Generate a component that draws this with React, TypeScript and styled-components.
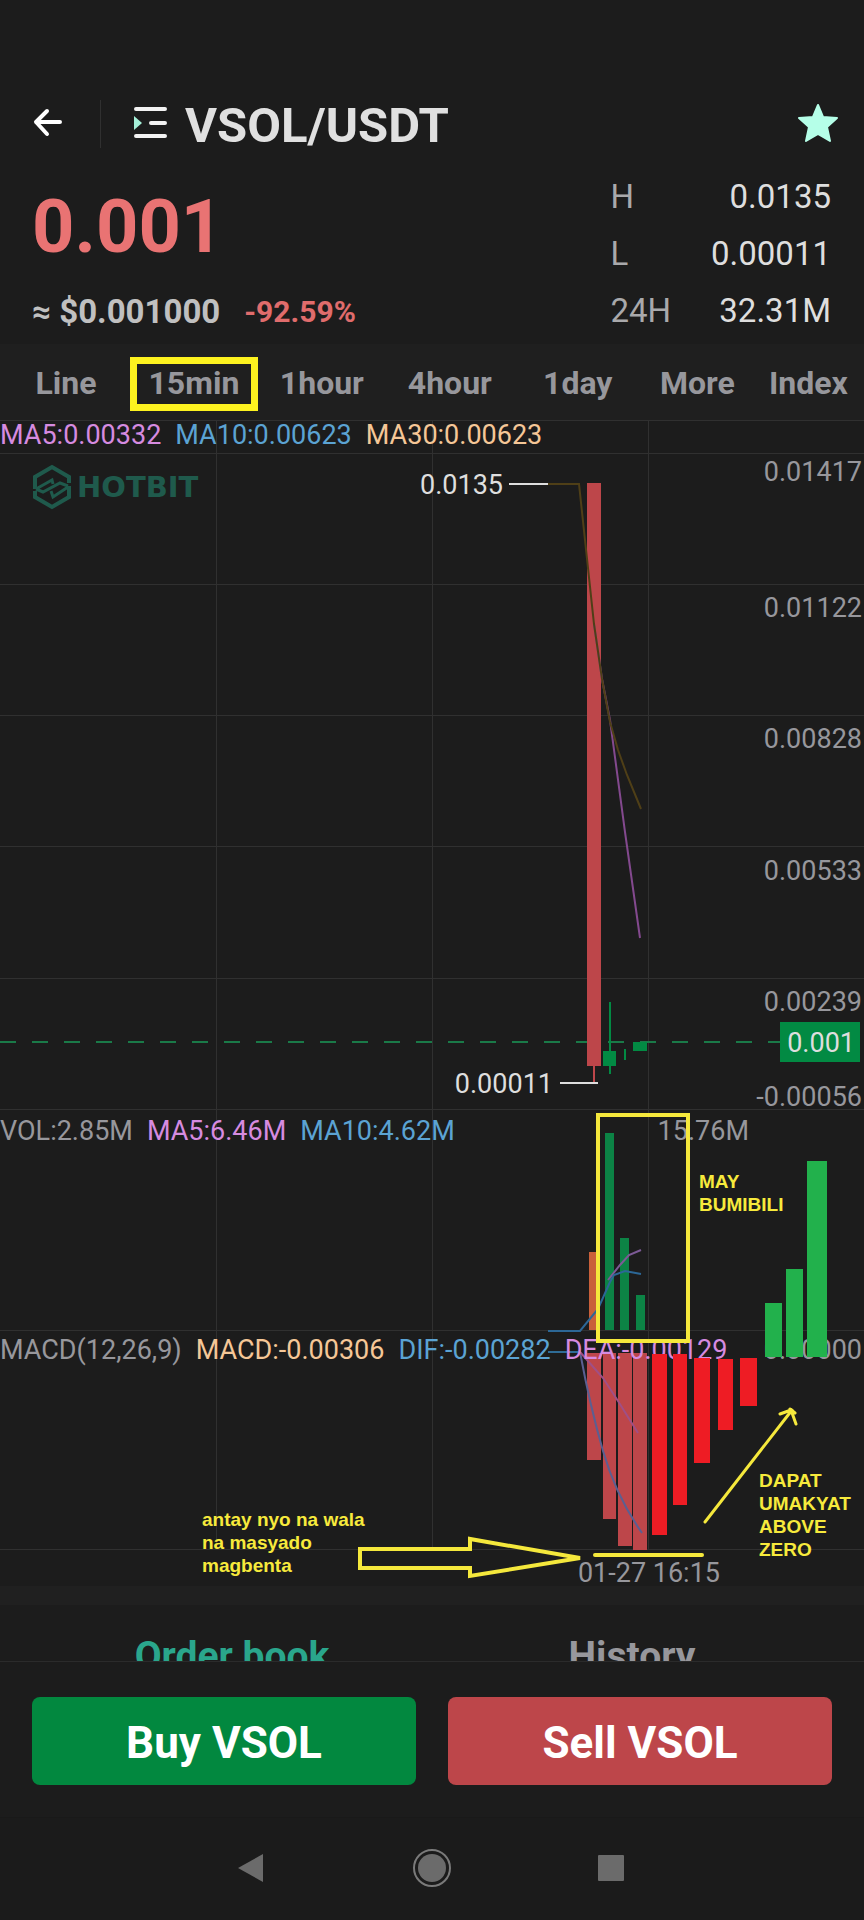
import React from "react";
import styled, { createGlobalStyle } from "styled-components";

const GlobalStyle = createGlobalStyle`
  * { box-sizing: border-box; }
  body {
    margin: 0;
    background: #1c1c1c;
    color: #dedede;
    font-family: Roboto, "Liberation Sans", sans-serif;
  }
  button { font-family: inherit; padding: 0; border: 0; background: none; color: inherit; cursor: pointer; }
`;

const Screen = styled.main`
  display: flex;
  flex-direction: column;
  min-height: 100vh;
  padding-top: 92px;
`;

const Header = styled.header`
  display: flex;
  align-items: center;
  height: 64px;
  padding: 0 24px 0 32px;
`;

const IconButton = styled.button`
  display: flex;
  align-items: center;
  justify-content: center;
`;

const Divider = styled.span`
  width: 1px;
  height: 48px;
  margin: 0 32px 0 37px;
  background: #303030;
`;

const Pair = styled.h1`
  flex: 1;
  margin: 0 0 0 18px;
  padding-top: 3px;
  font-size: 49px;
  line-height: 64px;
  font-weight: 700;
  color: #e0e0e0;
`;

const Summary = styled.section`
  display: flex;
  justify-content: space-between;
  padding: 12px 33px 5px 32px;
`;

const PriceColumn = styled.div`
  display: flex;
  flex-direction: column;
  justify-content: space-between;
`;

const Price = styled.strong`
  font-size: 74px;
  line-height: 117px;
  font-weight: 700;
  color: #e97373;
`;

const PriceDetail = styled.div`
  display: flex;
  align-items: center;
  gap: 24px;
  line-height: 54px;
  font-weight: 700;
  font-size: 33px;
  color: #c0c0c0;
`;

const Change = styled.span`
  font-size: 30px;
  color: #e06c6c;
`;

const Stats = styled.dl`
  display: grid;
  grid-template-columns: auto auto;
  column-gap: 40px;
  margin: 0;
  font-size: 33px;
  line-height: 57px;
`;

const StatName = styled.dt`
  color: #a9a9ab;
`;

const StatValue = styled.dd`
  margin: 0;
  text-align: right;
  color: #dedede;
`;

const IntervalBar = styled.nav`
  display: flex;
  align-items: center;
  height: 76px;
  padding: 3px 0 0 2px;
  background: #1f1f1f;
`;

const Interval = styled.button<{ $narrow?: boolean; $marked?: boolean }>`
  flex: ${(p) => (p.$narrow ? 110 : 129)} 1 0;
  height: 54px;
  border: 7px solid ${(p) => (p.$marked ? "#fdf21f" : "transparent")};
  padding-bottom: 2px;
  font-size: 32px;
  line-height: 38px;
  font-weight: 700;
  color: #97979c;
  white-space: nowrap;
`;

const Chart = styled.svg`
  display: block;
  width: 100%;
  height: auto;
  font-family: Roboto, "Liberation Sans", sans-serif;
  font-size: 27px;
`;

const Grid = styled.path`
  stroke: #303030;
  stroke-width: 1px;
  shape-rendering: crispEdges;
`;

const Axis = styled.text`
  fill: #97979c;
  text-anchor: end;
`;

const Mark = styled.text`
  fill: #dedede;
  text-anchor: end;
`;

const Brand = styled.text`
  fill: #1f5a4c;
  font-family: "DejaVu Sans", sans-serif;
  font-size: 29px;
  font-weight: 700;
`;

const Note = styled.text`
  fill: #f7ea3c;
  font-family: "Liberation Sans", Arial, sans-serif;
  font-size: 19px;
  font-weight: 700;
`;

const Separator = styled.div`
  height: 19px;
  background: #202020;
`;

const BookTabs = styled.div`
  display: flex;
  height: 56px;
  padding: 27px 32px 0;
  overflow: hidden;
`;

const BookTab = styled.button<{ $active?: boolean }>`
  flex: 1;
  height: 48px;
  font-size: 39px;
  line-height: 48px;
  font-weight: 700;
  color: ${(p) => (p.$active ? "#2aa68c" : "#97979c")};
`;

const TradeBar = styled.div`
  display: flex;
  gap: 32px;
  padding: 35px 32px 32px;
  border-top: 1px solid #2b2b2b;
`;

const TradeButton = styled.button<{ $side: "buy" | "sell" }>`
  flex: 1;
  height: 88px;
  border-radius: 8px;
  background: ${(p) => (p.$side === "buy" ? "#02883f" : "#bd464a")};
  font-size: 44px;
  padding-top: 3px;
  font-weight: 700;
  color: #ffffff;
`;

const SystemNav = styled.nav`
  flex: 1;
  display: flex;
  align-items: center;
  justify-content: center;
  gap: 140px;
  min-height: 102px;
  border-top: 1px solid #191919;
  background: #1b1b1b;
`;

const intervals = [
  { label: "Line" },
  { label: "15min", marked: true },
  { label: "1hour" },
  { label: "4hour" },
  { label: "1day" },
  { label: "More", narrow: true },
  { label: "Index", narrow: true },
];

const stats = [
  ["H", "0.0135"],
  ["L", "0.00011"],
  ["24H", "32.31M"],
];

const axisLabels: [string, number][] = [
  ["0.01417", 61],
  ["0.01122", 197],
  ["0.00828", 328],
  ["0.00533", 460],
  ["0.00239", 591],
  ["-0.00056", 686],
];

const GREY = "#97979c";
const VIOLET = "#d68be0";
const BLUE = "#5ba3d3";
const SAND = "#f5c797";
const YELLOW = "#f5e83c";

type Item = [string, string];
const legends: { y: number; items: Item[] }[] = [
  { y: 24, items: [["MA5:0.00332", VIOLET], ["MA10:0.00623", BLUE], ["MA30:0.00623", SAND]] },
  { y: 720, items: [["VOL:2.85M", GREY], ["MA5:6.46M", VIOLET], ["MA10:4.62M", BLUE]] },
  { y: 939, items: [["MACD(12,26,9)", GREY], ["MACD:-0.00306", SAND], ["DIF:-0.00282", BLUE], ["DEA:-0.00129", VIOLET]] },
];

type Bar = [x: number, y: number, width: number, height: number];
const volumeBars: Bar[] = [[605, 713, 9, 197], [620, 818, 9, 92], [636, 875, 9, 35]];
const macdBars: Bar[] = [[587, 933, 14, 107], [603, 933, 13, 166], [618, 933, 14, 193], [633, 933, 14, 197]];
const forecastDown: Bar[] = [[652, 934, 15, 181], [673, 934, 14, 151], [694, 938, 16, 105], [718, 939, 15, 71], [740, 938, 17, 48]];
const forecastUp: Bar[] = [[765, 883, 17, 54], [786, 849, 17, 88], [807, 741, 20, 196]];

function Bars({ bars, fill }: { bars: Bar[]; fill: string }) {
  return (
    <g fill={fill}>
      {bars.map(([x, y, width, height]) => (
        <rect key={x} x={x} y={y} width={width} height={height} />
      ))}
    </g>
  );
}

function NoteLines({ x, y, lines }: { x: number; y: number; lines: string[] }) {
  return (
    <Note>
      {lines.map((line, i) => (
        <tspan key={line} x={x} y={y + i * 23}>{line}</tspan>
      ))}
    </Note>
  );
}

function PriceChart() {
  return (
    <Chart viewBox="0 0 864 1166" role="img" aria-label="VSOL/USDT 15 minute chart">
      <Grid
        fill="none"
        d="M0 .5H864M0 33.5H864M0 164.5H864M0 295.5H864M0 426.5H864M0 558.5H864M0 689.5H864M0 910.5H864M0 1129.5H864M216.5 0V1129M432.5 0V1129M648.5 0V1129"
      />

      <g fill="none" stroke="#1f5a4c" strokeWidth="4">
        <path d="M69 63V57L52 47L35 57V69" />
        <path d="M35 71V77L52 87L69 77V66" />
        <path strokeWidth="3" d="M36 69L52 60L53 64M68 66L60 63L43 72L36 69M68 67L53 77L51 71" />
      </g>
      <Brand x="77" y="77">HOTBIT</Brand>

      <path d="M0 622H780" stroke="#1a7a48" strokeWidth="2" strokeDasharray="16 16" />
      <g fill="#028a43">
        <rect x="609" y="582" width="2" height="72" />
        <rect x="603" y="631" width="13" height="15" />
        <rect x="624" y="629" width="2" height="11" />
        <rect x="633" y="622" width="14" height="9" />
      </g>
      <rect x="587" y="63" width="14" height="583" fill="#bd464a" />
      <rect x="593" y="646" width="2" height="17" fill="#bd464a" />
      <g fill="none" strokeWidth="2">
        <path stroke="#83498e" d="M594 204L602 259L610 300L625 412L640 518" />
        <path stroke="#4f3f17" d="M548 64H579L594 204L602 259L610 302L618 330L627 355L641 389" />
        <path stroke="#dedede" d="M509 64H548M560 663H598" />
      </g>
      <Mark x="503" y="74">0.0135</Mark>
      <Mark x="553" y="673">0.00011</Mark>

      <rect x="589" y="832" width="10" height="78" fill="#c9603a" />
      <Bars bars={volumeBars} fill="#0c8345" />
      <g fill="none" strokeWidth="2">
        <path stroke="#7c5a96" d="M608 860L620 845L629 835L641 830" />
        <path stroke="#2c6796" d="M548 911H580L598 889L610 862L614 855L625 851L641 854" />
      </g>

      <Bars bars={macdBars} fill="#bd464a" />
      <g fill="none" strokeWidth="2">
        <path stroke="#2f6c96" d="M548 932H580" />
        <path stroke="#5a5f92" d="M580 932Q590 986 603 1031T642 1113" />
        <path stroke="#a04f86" d="M580 932L603 958L618 981L638 1013" />
      </g>

      {axisLabels.map(([label, y]) => (
        <Axis key={label} x="862" y={y}>{label}</Axis>
      ))}
      <Axis x="749" y="720">15.76M</Axis>
      <Axis x="862" y="939">0.00000</Axis>
      <Axis x="720" y="1162">01-27 16:15</Axis>
      <rect x="780" y="602" width="80" height="40" fill="#028a43" />
      <Mark x="855" y="632">0.001</Mark>

      {legends.map(({ y, items }) => (
        <text key={y} x="0" y={y}>
          {items.map(([label, color], i) => (
            <tspan key={label} fill={color} dx={i ? 14 : 0}>{label}</tspan>
          ))}
        </text>
      ))}

      <Bars bars={forecastDown} fill="#ee1c24" />
      <Bars bars={forecastUp} fill="#22b14c" />
      <g fill="none" stroke={YELLOW} strokeWidth="4">
        <rect x="598" y="695" width="90" height="226" />
        <path d="M595 1135H702" strokeLinecap="round" />
        <path d="M360 1129H470V1119L580 1138L470 1156V1148H360Z" />
        <path strokeWidth="3" strokeLinecap="round" d="M705 1102L792 990M780 994L791 990L796 1004M790 989L795 993" />
      </g>
      <NoteLines x={699} y={768} lines={["MAY", "BUMIBILI"]} />
      <NoteLines x={759} y={1067} lines={["DAPAT", "UMAKYAT", "ABOVE", "ZERO"]} />
      <NoteLines x={202} y={1106} lines={["antay nyo na wala", "na masyado", "magbenta"]} />
    </Chart>
  );
}

export default function App() {
  return (
    <>
      <GlobalStyle />
      <Screen>
        <Header>
          <IconButton aria-label="Back">
            <svg width="31" height="32" viewBox="0 0 31 32" fill="none" stroke="#fff" strokeWidth="4" strokeLinecap="round" strokeLinejoin="round">
              <path d="M15 3L4 14L15 26M4 14H28" />
            </svg>
          </IconButton>
          <Divider />
          <IconButton aria-label="Choose pair">
            <svg width="34" height="34" viewBox="0 0 34 34">
              <path d="M3 2H32M18 16H32M3 29H32" stroke="#f2f2f2" strokeWidth="4" strokeLinecap="round" />
              <path d="M1 9L9 16L1 23Z" fill="#a5f0d8" />
            </svg>
          </IconButton>
          <Pair>VSOL/USDT</Pair>
          <IconButton aria-label="Favourite">
            <svg width="44" height="44" viewBox="0 0 44 44">
              <path d="M22 3L27 15L41 16L31 25L34 39L22 32L10 39L13 25L3 16L17 15Z" fill="#b5ffe8" stroke="#b5ffe8" strokeWidth="2" strokeLinejoin="round" />
            </svg>
          </IconButton>
        </Header>

        <Summary>
          <PriceColumn>
            <Price>0.001</Price>
            <PriceDetail>
              <span>≈ $0.001000</span>
              <Change>-92.59%</Change>
            </PriceDetail>
          </PriceColumn>
          <Stats>
            {stats.map(([name, value]) => (
              <React.Fragment key={name}>
                <StatName>{name}</StatName>
                <StatValue>{value}</StatValue>
              </React.Fragment>
            ))}
          </Stats>
        </Summary>

        <IntervalBar>
          {intervals.map((it) => (
            <Interval key={it.label} $narrow={it.narrow} $marked={it.marked}>{it.label}</Interval>
          ))}
        </IntervalBar>

        <PriceChart />
        <Separator />

        <BookTabs>
          <BookTab $active>Order book</BookTab>
          <BookTab>History</BookTab>
        </BookTabs>

        <TradeBar>
          <TradeButton $side="buy">Buy VSOL</TradeButton>
          <TradeButton $side="sell">Sell VSOL</TradeButton>
        </TradeBar>

        <SystemNav>
          <IconButton aria-label="System back">
            <svg width="40" height="40" viewBox="0 0 40 40"><path d="M6 19L31 5V33Z" fill="#6b6b6b" /></svg>
          </IconButton>
          <IconButton aria-label="Home">
            <svg width="40" height="40" viewBox="0 0 40 40">
              <circle cx="20" cy="19" r="18" fill="none" stroke="#7a7a7a" strokeWidth="2" />
              <circle cx="20" cy="19" r="14" fill="#6b6b6b" />
            </svg>
          </IconButton>
          <IconButton aria-label="Recent apps">
            <svg width="40" height="40" viewBox="0 0 40 40"><rect x="6" y="6" width="26" height="26" rx="1" fill="#6b6b6b" /></svg>
          </IconButton>
        </SystemNav>
      </Screen>
    </>
  );
}
